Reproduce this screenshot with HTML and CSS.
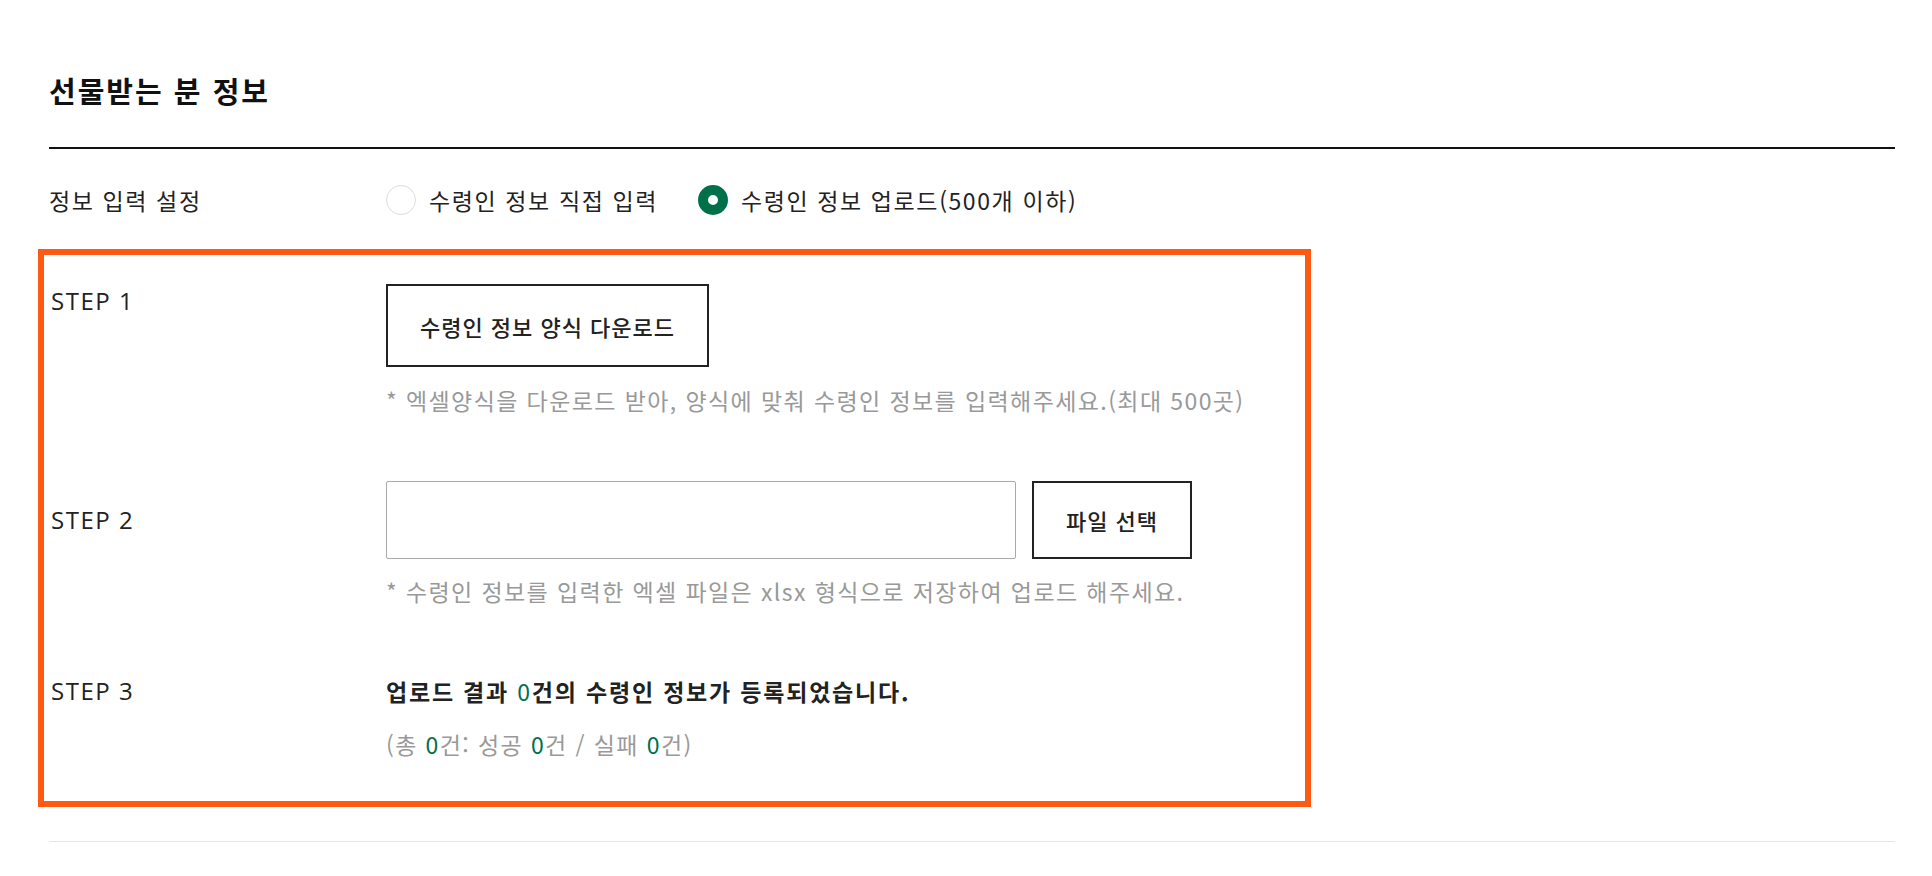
FILE: index.html
```html
<!DOCTYPE html>
<html lang="ko">
<head>
  <meta charset="UTF-8" />
  <meta name="viewport" content="width=device-width, initial-scale=1" />
  <title>선물받는 분 정보</title>
  <link rel="stylesheet" href="styles.css">
</head>
<body>
  <div class="wrap">
    <h2 class="titulo">선물받는 분 정보</h2>

    <div class="fila fila-config">
      <div class="etiqueta">정보 입력 설정</div>
      <div class="opciones">
        <label class="opcion">
          <span class="radio"></span>
          <span>수령인 정보 직접 입력</span>
        </label>
        <label class="opcion">
          <span class="radio activo"></span>
          <span>수령인 정보 업로드(500개 이하)</span>
        </label>
      </div>
    </div>

    <div class="pasos">
      <div class="paso paso1">
        <div class="paso-nombre">STEP 1</div>
        <div class="paso-cuerpo">
          <button class="btn-borde btn-descarga">수령인 정보 양식 다운로드</button>
          <p class="nota">* 엑셀양식을 다운로드 받아, 양식에 맞춰 수령인 정보를 입력해주세요.(최대 500곳)</p>
        </div>
      </div>

      <div class="paso paso2">
        <div class="paso-nombre">STEP 2</div>
        <div class="paso-cuerpo">
          <div class="archivo">
            <input type="text" class="archivo-nombre" readonly />
            <button class="btn-borde btn-archivo">파일 선택</button>
          </div>
          <p class="nota">* 수령인 정보를 입력한 엑셀 파일은 xlsx 형식으로 저장하여 업로드 해주세요.</p>
        </div>
      </div>

      <div class="paso paso3">
        <div class="paso-nombre">STEP 3</div>
        <div class="paso-cuerpo">
          <p class="resultado">업로드 결과 <span class="num">0</span>건의 수령인 정보가 등록되었습니다.</p>
          <p class="detalle">(총 <span class="num">0</span>건: 성공 <span class="num">0</span>건 / 실패 <span class="num">0</span>건)</p>
        </div>
      </div>
    </div>

    <div class="pie"></div>
  </div>
</body>
</html>
```

FILE: styles.css
```css
body {
  margin: 0;
  background: #fff;
  color: #222;
  font-family: 'Noto Sans CJK KR', 'Noto Sans', sans-serif;
  font-size: 23px;
  letter-spacing: 1.4px;
}
.wrap {
  padding: 0 37px 0 49px;
}
.titulo {
  margin: 0;
  padding: 70px 0 37px;
  line-height: 40px;
  font-size: 29px;
  font-weight: 700;
  letter-spacing: 2px;
  color: #111;
  border-bottom: 2px solid #111;
}
.fila {
  display: grid;
  grid-template-columns: 337px 1fr;
}
.fila-config {
  padding: 36px 0 45px;
  align-items: center;
}
.etiqueta {
  line-height: 30px;
  letter-spacing: 1.6px;
}
.opciones {
  display: flex;
  align-items: center;
  gap: 40px;
}
.opcion {
  display: flex;
  align-items: center;
  gap: 13px;
  line-height: 30px;
  letter-spacing: 1.6px;
  cursor: pointer;
}
.radio {
  display: block;
  width: 30px;
  height: 30px;
  background: #fff;
  border: 1px solid #ddd;
  border-radius: 50%;
  box-sizing: border-box;
}
.radio.activo {
  border: 10px solid #00704a;
}

/* caja naranja de la seccion de pasos */
.pasos {
  width: 1251px;
  padding: 24px 0 37px;
  outline: 6px solid #ff5a14;
  outline-offset: 5px;
}
.paso {
  display: grid;
  grid-template-columns: 337px 1fr;
}
.paso-nombre {
  font-family: 'Open Sans', sans-serif;
  font-size: 24px;
  letter-spacing: 1.5px;
  line-height: 34px;
  padding-left: 2px;
}
.paso2 {
  margin-top: 66px;
}
.paso2 .paso-nombre {
  padding-top: 22px;
}
.paso3 {
  margin-top: 68px;
}
.paso-cuerpo p {
  margin: 0;
}
.btn-borde {
  background: #fff;
  border: 2px solid #222;
  font-family: inherit;
  font-size: 22px;
  font-weight: 500;
  letter-spacing: 1px;
  color: #222;
  cursor: pointer;
}
.btn-descarga {
  width: 323px;
  height: 83px;
}
.nota {
  color: #999;
  line-height: 30px;
}
.paso1 .nota {
  margin-top: 18px !important;
}
.paso2 .nota {
  margin-top: 17px !important;
}
.archivo {
  display: flex;
  gap: 16px;
}
.archivo-nombre {
  width: 630px;
  height: 78px;
  box-sizing: border-box;
  border: 1px solid #aaa;
  border-radius: 2px;
  font-size: 22px;
}
.btn-archivo {
  width: 160px;
  height: 78px;
}
.resultado {
  font-weight: 700;
  line-height: 34px;
  letter-spacing: 1.8px;
}
.resultado .num {
  font-weight: 400;
}
.detalle {
  color: #999;
  line-height: 30px;
  margin-top: 21px !important;
}
.num {
  color: #00704a;
}
.pie {
  margin-top: 45px;
  border-top: 1px solid #e6e6e6;
}
```
